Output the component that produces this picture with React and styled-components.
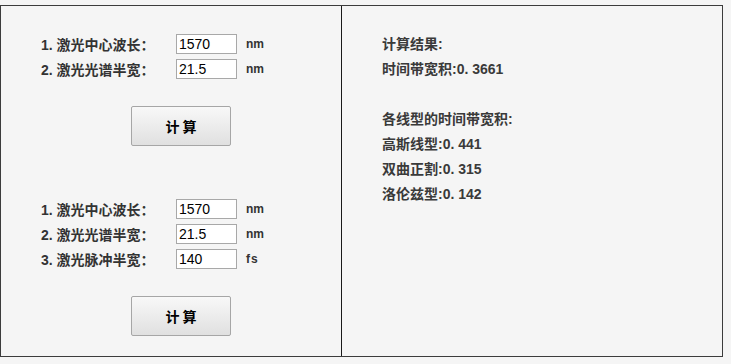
import React from "react";
import styled, { createGlobalStyle } from "styled-components";

const GlobalStyle = createGlobalStyle`
  html, body {
    margin: 0;
    padding: 0;
    background: #f5f5f5;
  }
  body {
    font-family: "Liberation Sans", "Noto Sans CJK SC", sans-serif;
    color: #333;
  }
`;

const Frame = styled.div`
  display: grid;
  grid-template-columns: 341px 381px;
  width: 723px;
  height: 352px;
  margin-top: 5px;
  border: 1px solid #3c3c3c;
  box-sizing: border-box;
  background: #f5f5f5;
`;

const LeftPanel = styled.div`
  display: flex;
  flex-direction: column;
  padding: 28px 0 0 40px;
  border-right: 1px solid #1a1a1a;
`;

const Form = styled.div`
  display: flex;
  flex-direction: column;
  gap: 5px;
  margin-top: ${props => props.offset || 0}px;
`;

const Row = styled.div`
  display: flex;
  align-items: center;
  height: 20px;
`;

const Label = styled.span`
  width: 135px;
  font-size: 14px;
  font-weight: bold;
  color: #333;
  white-space: nowrap;
`;

const Input = styled.input`
  width: 61px;
  height: 20px;
  box-sizing: border-box;
  border: 1px solid #a8a8a8;
  background: #fff;
  padding: 0 0 0 2px;
  font-family: "Liberation Sans", Arial, sans-serif;
  font-size: 14px;
  color: #000;
  outline: none;
`;

const Unit = styled.span`
  margin-left: 9px;
  font-size: 12px;
  font-weight: bold;
  color: #333;
  letter-spacing: ${props => (props.wide ? "1px" : "0")};
`;

const Button = styled.button`
  width: 100px;
  height: 40px;
  margin: 27px 0 0 90px;
  border: 1px solid #a6a6a6;
  border-radius: 2px;
  background: linear-gradient(#f8f8f8, #e0e0e0);
  font-family: "Noto Sans CJK SC", sans-serif;
  font-size: 14px;
  font-weight: bold;
  color: #000;
  cursor: pointer;
`;

const RightPanel = styled.div`
  display: flex;
  flex-direction: column;
  padding: 26px 0 0 40px;
`;

const Line = styled.div`
  height: 25px;
  line-height: 25px;
  font-size: 14px;
  font-weight: bold;
  color: #3a3a3a;
  white-space: nowrap;
`;

function Field({ label, value, unit }) {
  return (
    <Row>
      <Label>{label}</Label>
      <Input defaultValue={value} />
      <Unit wide={unit === "fs"}>{unit}</Unit>
    </Row>
  );
}

export default function App() {
  return (
    <>
      <GlobalStyle />
      <Frame>
        <LeftPanel>
          <Form>
            <Field label="1. 激光中心波长：" value="1570" unit="nm" />
            <Field label="2. 激光光谱半宽：" value="21.5" unit="nm" />
          </Form>
          <Button>计 算</Button>
          <Form offset={53}>
            <Field label="1. 激光中心波长：" value="1570" unit="nm" />
            <Field label="2. 激光光谱半宽：" value="21.5" unit="nm" />
            <Field label="3. 激光脉冲半宽：" value="140" unit="fs" />
          </Form>
          <Button>计 算</Button>
        </LeftPanel>
        <RightPanel>
          <Line>计算结果:</Line>
          <Line>时间带宽积:0. 3661</Line>
          <Line />
          <Line>各线型的时间带宽积:</Line>
          <Line>高斯线型:0. 441</Line>
          <Line>双曲正割:0. 315</Line>
          <Line>洛伦兹型:0. 142</Line>
        </RightPanel>
      </Frame>
    </>
  );
}
